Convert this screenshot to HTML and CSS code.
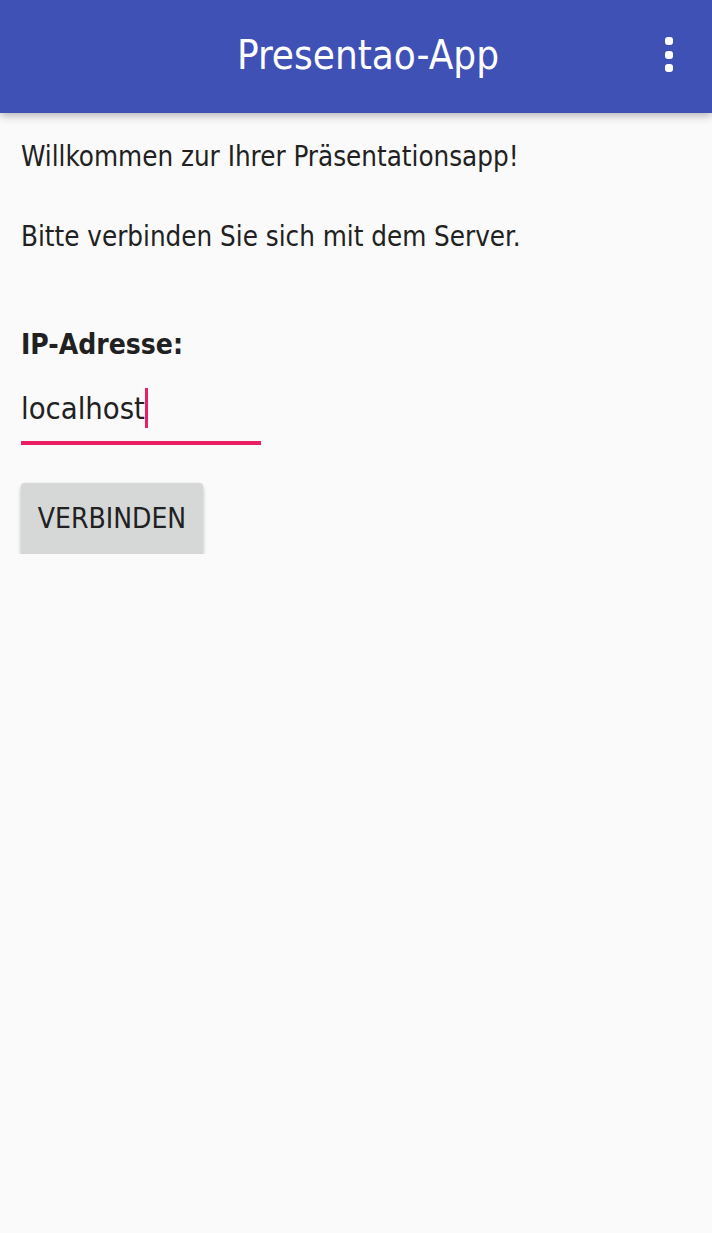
FILE: index.html
```html
<!DOCTYPE html>
<html lang="de">
<head>
<meta charset="utf-8">
<link rel="stylesheet" href="styles.css">
</head>
<body>
<header class="appbar">
  <div class="title">Presentao-App</div>
  <div class="menu" aria-label="Menü">
    <span class="dot"></span><span class="dot"></span><span class="dot"></span>
  </div>
</header>
<main class="content">
  <p class="line first">Willkommen zur Ihrer Präsentationsapp!</p>
  <p class="line second">Bitte verbinden Sie sich mit dem Server.</p>
  <label class="label">IP-Adresse:</label>
  <div class="field">
    <span class="value">localhost</span><span class="caret"></span>
  </div>
  <button class="btn">VERBINDEN</button>
</main>
</body>
</html>
```
FILE: styles.css
```css
html, body {
  margin: 0;
  padding: 0;
  background: #fafafa;
  font-family: "DejaVu Sans Condensed", "DejaVu Sans", sans-serif;
  color: #212121;
}
.appbar {
  height: 113px;
  background: #3f51b5;
  display: flex;
  align-items: center;
  justify-content: center;
  position: relative;
  box-shadow: 0 2px 9px rgba(0,0,0,0.32);
}
.title {
  color: #fff;
  font-size: 40px;
  margin-left: 24px;
  margin-top: -3px;
}
.menu {
  position: absolute;
  right: 39px;
  top: 37px;
  display: flex;
  flex-direction: column;
  gap: 5.5px;
}
.dot {
  width: 8px;
  height: 8px;
  border-radius: 3px;
  background: #fff;
}
.content {
  padding: 0 21px;
  display: flex;
  flex-direction: column;
  align-items: flex-start;
}
.line {
  margin: 0;
  font-size: 27.5px;
  line-height: 32px;
}
.first { margin-top: 27px; }
.second { margin-top: 48px; }
.label {
  font-weight: bold;
  font-size: 28px;
  margin-top: 77px;
  line-height: 32px;
}
.field {
  width: 240px;
  border-bottom: 4px solid #e91e63;
  display: flex;
  align-items: center;
  height: 66px;
  margin-top: 14px;
}
.value { font-size: 30.7px; }
.caret {
  width: 3px;
  height: 40px;
  background: #e91e63;
}
.btn {
  margin-top: 38px;
  width: 182px;
  height: 71px;
  background: #d6d7d7;
  border: none;
  border-radius: 4px;
  box-shadow: 0 3px 4px rgba(0,0,0,0.22), 0 0 2px rgba(0,0,0,0.08);
  font-family: inherit;
  font-size: 28px;
  color: #212121;
  padding: 0;
}
```
